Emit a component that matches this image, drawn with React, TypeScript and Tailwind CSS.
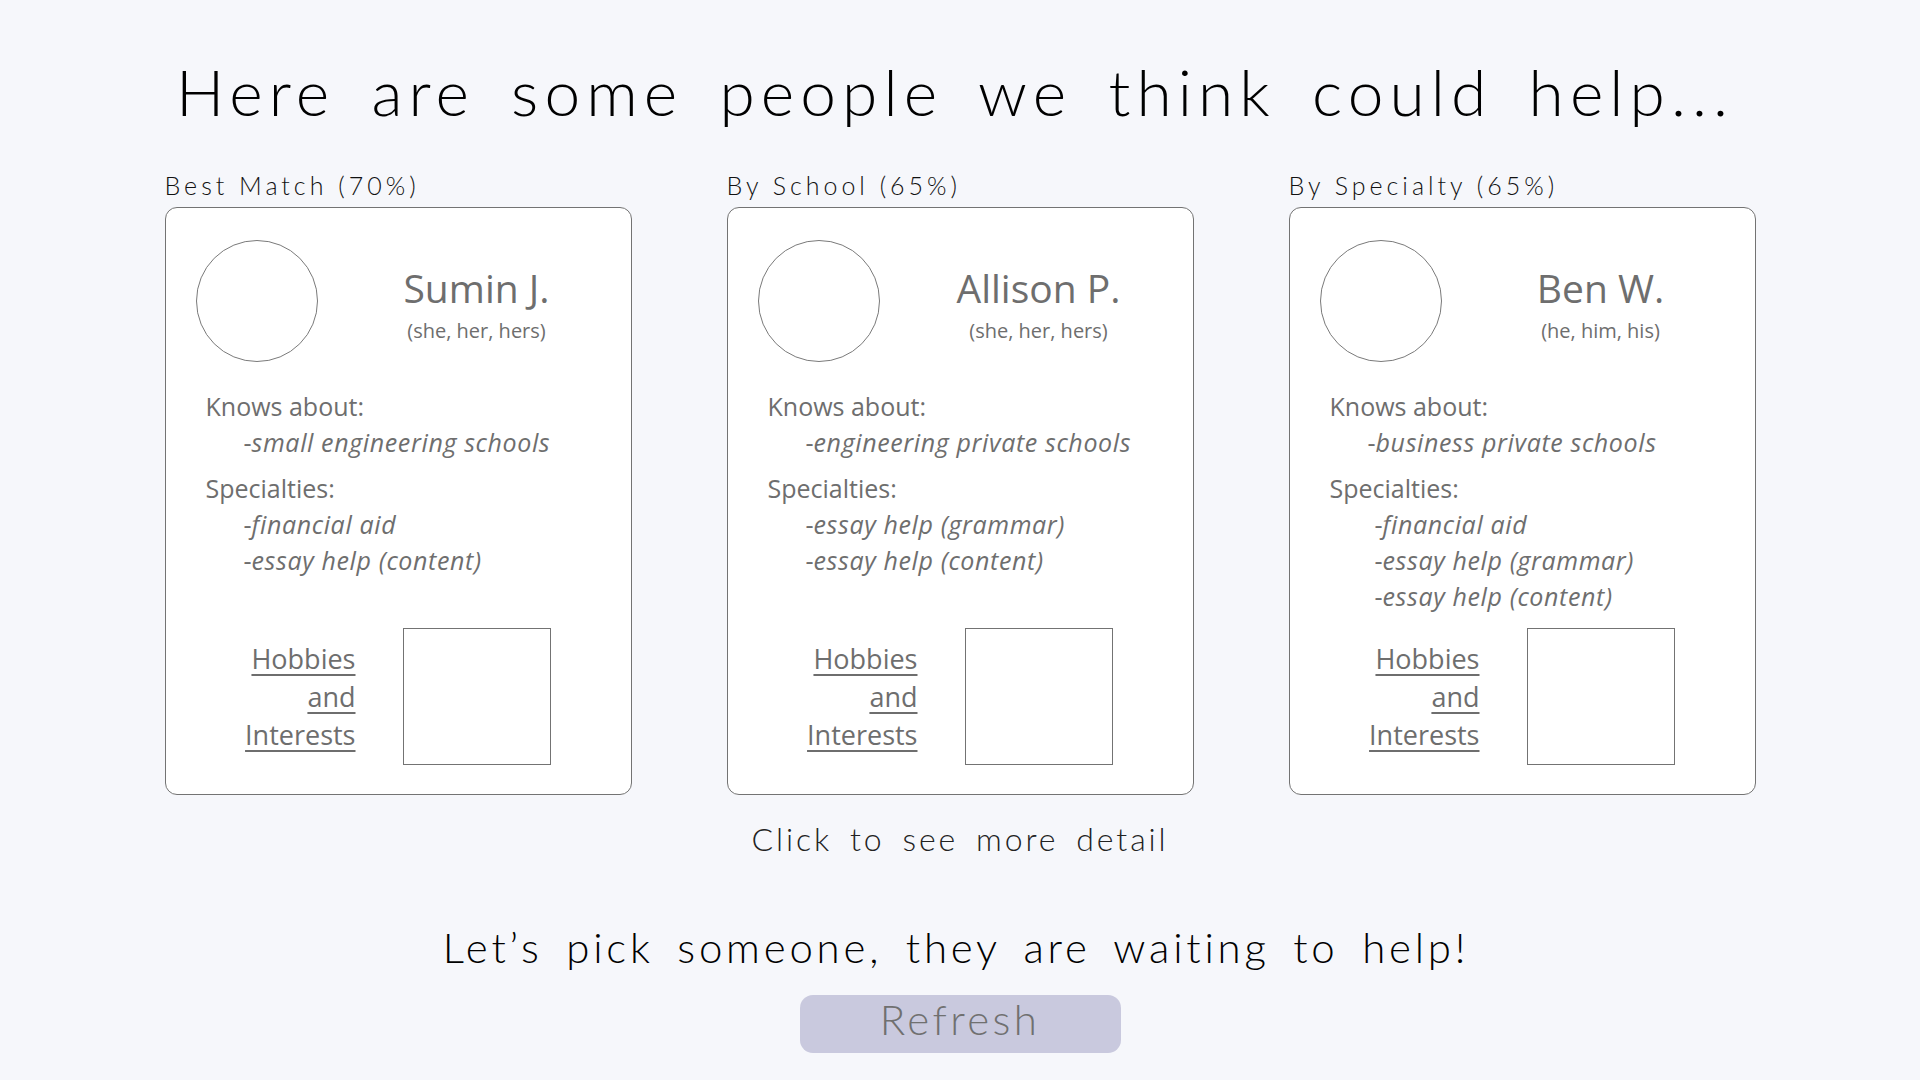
import React from 'react';

type IMatch = {
  label: string;
  name: string;
  pronouns: string;
  knows: string[];
  specialties: string[];
  wideIndent?: boolean;
};

const matches: IMatch[] = [
  {
    label: 'Best Match (70%)',
    name: 'Sumin J.',
    pronouns: '(she, her, hers)',
    knows: ['small engineering schools'],
    specialties: ['financial aid', 'essay help (content)'],
  },
  {
    label: 'By School (65%)',
    name: 'Allison P.',
    pronouns: '(she, her, hers)',
    knows: ['engineering private schools'],
    specialties: ['essay help (grammar)', 'essay help (content)'],
  },
  {
    label: 'By Specialty (65%)',
    name: 'Ben W.',
    pronouns: '(he, him, his)',
    knows: ['business private schools'],
    specialties: ['financial aid', 'essay help (grammar)', 'essay help (content)'],
    wideIndent: true,
  },
];

const geo = "font-['Lato',sans-serif] font-light";
const body = "font-['Open_Sans',sans-serif]";

const Item = (props: { text: string }) => (
  <div className="leading-[36px]">
    -<span className="italic tracking-[0.025em]">{props.text}</span>
  </div>
);

const MatchCard = (props: { match: IMatch }) => (
  <div className="flex w-[467px] flex-col">
    {/* Label */}
    <div className={`${geo} mb-[9px] text-[25px] leading-none tracking-[0.16em] text-[#111]`}>
      {props.match.label}
    </div>

    <div className={`${body} flex h-[588px] flex-col rounded-[12px] border border-[#737373] bg-white pt-[32px] text-[#6e6e6e]`}>
      {/* Photo + name */}
      <div className="flex items-start pl-[30px]">
        <div className="size-[122px] shrink-0 rounded-full border border-[#7a7a7a]" />
        <div className="ml-[59px] mt-[28px] flex w-[200px] flex-col items-center">
          <div className="text-[39px] leading-none">{props.match.name}</div>
          <div className="mt-[14px] text-[20px] leading-none">{props.match.pronouns}</div>
        </div>
      </div>

      {/* Details */}
      <div className="mt-[26px] pl-[40px] text-[25px]">
        <div className="leading-[36px]">Knows about:</div>
        <div className="pl-[38px]">
          {props.match.knows.map((k) => (
            <Item key={k} text={k} />
          ))}
        </div>
        <div className="mt-[10px] leading-[36px]">Specialties:</div>
        <div className={props.match.wideIndent ? 'pl-[45px]' : 'pl-[38px]'}>
          {props.match.specialties.map((s) => (
            <Item key={s} text={s} />
          ))}
        </div>
      </div>

      {/* Hobbies */}
      <div className="mt-auto flex items-center pb-[29px] pl-[40px]">
        <div className="flex w-[150px] flex-col items-end text-[27px] leading-[38px]">
          <span className="underline underline-offset-[5px]">Hobbies</span>
          <span className="underline underline-offset-[5px]">and</span>
          <span className="underline underline-offset-[5px]">Interests</span>
        </div>
        <div className="ml-[47px] h-[137px] w-[148px] border border-[#737373]" />
      </div>
    </div>
  </div>
);

export default function App() {
  return (
    <div className="flex min-h-screen w-full flex-col items-center bg-[#f6f7fb] pt-[60px]">
      <h1 className={`${geo} pr-[10px] text-center text-[64px] leading-none tracking-[0.095em] text-black [word-spacing:0.2em]`}>
        Here are some people we think could help...
      </h1>

      <div className="mt-[49px] flex justify-center gap-[95px]">
        {matches.map((m) => (
          <MatchCard key={m.name} match={m} />
        ))}
      </div>

      <div className={`${geo} mt-[28px] text-[32px] leading-none tracking-[0.09em] text-[#222] [word-spacing:0.2em]`}>
        Click to see more detail
      </div>

      <div className={`${geo} mt-[71px] pr-[8px] text-[42px] leading-none tracking-[0.09em] text-black [word-spacing:0.2em]`}>
        Let’s pick someone, they are waiting to help!
      </div>

      <button className={`${geo} mt-[27px] flex h-[58px] w-[321px] items-center justify-center rounded-[13px] bg-[#c9c9de] pb-[10px] text-[42px] leading-none tracking-[0.08em] text-[#707070]`}>
        Refresh
      </button>
    </div>
  );
}
